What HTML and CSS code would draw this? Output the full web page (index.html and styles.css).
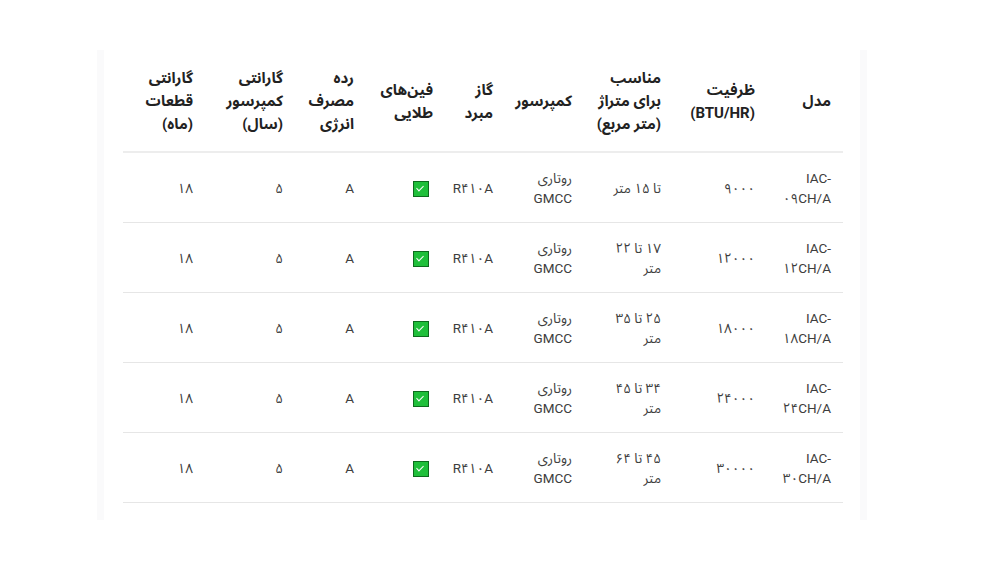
FILE: index.html
```html
<!DOCTYPE html>
<html lang="fa">
<head>
<meta charset="utf-8">
<title>مشخصات</title>
<link rel="stylesheet" href="styles.css">
</head>
<body>
<div class="frame">
  <div class="inner">
    <table class="spec" dir="rtl">
      <colgroup>
        <col class="c-model"><col class="c-cap"><col class="c-area"><col class="c-comp"><col class="c-gas"><col class="c-fin"><col class="c-energy"><col class="c-wc"><col class="c-wp">
      </colgroup>
      <thead>
        <tr>
          <th>مدل</th>
          <th>ظرفیت<br>(BTU/HR)</th>
          <th>مناسب<br>برای متراژ<br>(متر مربع)</th>
          <th>کمپرسور</th>
          <th>گاز<br>مبرد</th>
          <th>فین‌های<br>طلایی</th>
          <th>رده<br>مصرف<br>انرژی</th>
          <th>گارانتی<br>کمپرسور<br>(سال)</th>
          <th>گارانتی<br>قطعات<br>(ماه)</th>
        </tr>
      </thead>
      <tbody>
        <tr>
          <td><bdi dir="ltr">IAC-</bdi><br><bdi dir="ltr">۰۹CH/A</bdi></td><td>۹۰۰۰</td><td>تا ۱۵ متر</td><td>روتاری<br>GMCC</td><td><bdi dir="ltr">R۴۱۰A</bdi></td><td><span class="check"></span></td><td>A</td><td>۵</td><td>۱۸</td>
        </tr>
        <tr>
          <td><bdi dir="ltr">IAC-</bdi><br><bdi dir="ltr">۱۲CH/A</bdi></td><td>۱۲۰۰۰</td><td>۱۷ تا ۲۲<br>متر</td><td>روتاری<br>GMCC</td><td><bdi dir="ltr">R۴۱۰A</bdi></td><td><span class="check"></span></td><td>A</td><td>۵</td><td>۱۸</td>
        </tr>
        <tr>
          <td><bdi dir="ltr">IAC-</bdi><br><bdi dir="ltr">۱۸CH/A</bdi></td><td>۱۸۰۰۰</td><td>۲۵ تا ۳۵<br>متر</td><td>روتاری<br>GMCC</td><td><bdi dir="ltr">R۴۱۰A</bdi></td><td><span class="check"></span></td><td>A</td><td>۵</td><td>۱۸</td>
        </tr>
        <tr>
          <td><bdi dir="ltr">IAC-</bdi><br><bdi dir="ltr">۲۴CH/A</bdi></td><td>۲۴۰۰۰</td><td>۳۴ تا ۴۵<br>متر</td><td>روتاری<br>GMCC</td><td><bdi dir="ltr">R۴۱۰A</bdi></td><td><span class="check"></span></td><td>A</td><td>۵</td><td>۱۸</td>
        </tr>
        <tr>
          <td><bdi dir="ltr">IAC-</bdi><br><bdi dir="ltr">۳۰CH/A</bdi></td><td>۳۰۰۰۰</td><td>۴۵ تا ۶۴<br>متر</td><td>روتاری<br>GMCC</td><td><bdi dir="ltr">R۴۱۰A</bdi></td><td><span class="check"></span></td><td>A</td><td>۵</td><td>۱۸</td>
        </tr>
      </tbody>
    </table>
  </div>
</div>
</body>
</html>
```
FILE: styles.css
```css
html, body {
  margin: 0;
  padding: 0;
  background: #ffffff;
}
body {
  font-family: "Roboto", "Noto Sans Arabic", "DejaVu Sans", sans-serif;
  color: #3d3d3d;
  width: 1006px;
  height: 587px;
  overflow: hidden;
}
.frame {
  margin: 50px 0 0 97px;
  width: 770px;
  height: 470px;
  box-sizing: border-box;
  border-left: 7px solid #fafafb;
  border-right: 7px solid #fafafb;
  display: flex;
}
.inner {
  flex: 1;
  padding: 5px 16px 0 19px;
}
.spec {
  width: 720px;
  border-collapse: collapse;
  table-layout: fixed;
}
.c-model { width: 76px; }
.c-cap { width: 94px; }
.c-area { width: 89px; }
.c-comp { width: 79px; }
.c-gas { width: 60px; }
.c-fin { width: 79px; }
.c-energy { width: 71px; }
.c-wc { width: 90px; }
.c-wp { width: 82px; }
.spec th {
  font-weight: 700;
  font-size: 15px;
  line-height: 23px;
  color: #222;
  text-align: right;
  vertical-align: middle;
  padding: 12px 12px 15px;
  border-bottom: 2px solid #ededed;
}
.spec td {
  font-size: 13.5px;
  line-height: 20px;
  text-align: right;
  vertical-align: middle;
  padding: 0 12px;
  height: 69px;
  border-bottom: 1px solid #e6e6e6;
}
.check {
  display: inline-block;
  width: 14px;
  height: 14px;
  margin-right: 4px;
  background: #1fbf3a;
  border: 1px solid #0d6b1d;
  position: relative;
  vertical-align: middle;
}
.check::after {
  content: "";
  position: absolute;
  left: 4px;
  top: 2px;
  width: 3px;
  height: 6px;
  border: solid #ffffff;
  border-width: 0 1.5px 1.5px 0;
  transform: rotate(45deg);
}
```
